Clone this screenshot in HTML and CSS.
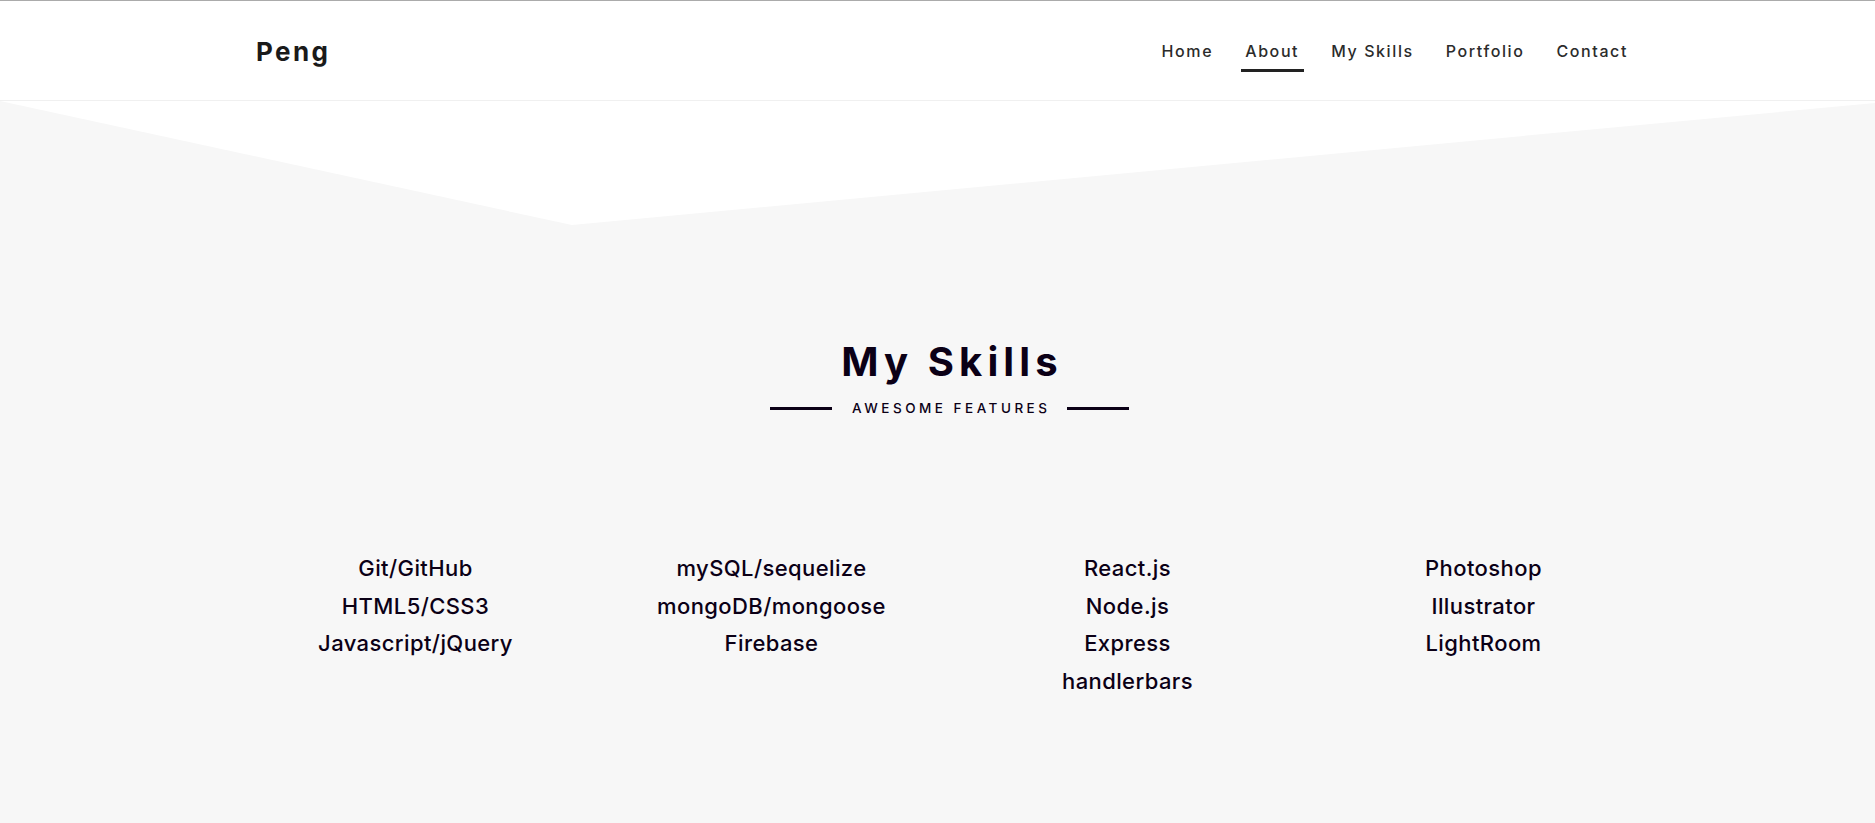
FILE: index.html
```html
<!DOCTYPE html>
<html lang="en">
<head>
<meta charset="utf-8">
<title>Peng</title>
<link rel="stylesheet" href="styles.css">
</head>
<body>
<header class="site-header">
  <div class="header-inner">
    <a class="brand" href="#">Peng</a>
    <nav class="main-nav">
      <a class="nav-link" href="#">Home</a>
      <a class="nav-link active" href="#">About</a>
      <a class="nav-link" href="#">My Skills</a>
      <a class="nav-link" href="#">Portfolio</a>
      <a class="nav-link" href="#">Contact</a>
    </nav>
  </div>
</header>
<section class="skills">
  <div class="skills-inner">
    <div class="section-head">
      <h2 class="section-title">My Skills</h2>
      <div class="section-sub">
        <span class="rule"></span>
        <span class="sub-text">AWESOME FEATURES</span>
        <span class="rule"></span>
      </div>
    </div>
    <div class="skill-grid">
      <ul class="skill-col">
        <li>Git/GitHub</li>
        <li>HTML5/CSS3</li>
        <li>Javascript/jQuery</li>
      </ul>
      <ul class="skill-col">
        <li>mySQL/sequelize</li>
        <li>mongoDB/mongoose</li>
        <li>Firebase</li>
      </ul>
      <ul class="skill-col">
        <li>React.js</li>
        <li>Node.js</li>
        <li>Express</li>
        <li>handlerbars</li>
      </ul>
      <ul class="skill-col">
        <li>Photoshop</li>
        <li>Illustrator</li>
        <li>LightRoom</li>
      </ul>
    </div>
  </div>
</section>
</body>
</html>
```
FILE: styles.css
```css
* { box-sizing: border-box; }
html, body { margin: 0; padding: 0; }
body {
  font-family: Inter, "Open Sans", "DejaVu Sans", sans-serif;
  background: #f7f7f7;
  color: #111;
  height: 823px;
  overflow: hidden;
}
a { text-decoration: none; color: inherit; }

.site-header {
  background: #fff;
  border-top: 1px solid #ababab;
  border-bottom: 1px solid #f0f0f0;
  height: 101px;
}
.header-inner {
  display: flex;
  align-items: center;
  justify-content: space-between;
  height: 99px;
  padding: 0 248px 0 256px;
}
.brand {
  font-size: 26px;
  font-weight: 700;
  letter-spacing: 2.4px;
  color: #1a1a1a;
  margin-top: 2px;
}
.main-nav {
  display: flex;
  align-items: center;
  margin-top: 1px;
  margin-right: -17px;
}
.nav-link {
  position: relative;
  font-size: 16px;
  font-weight: 500;
  letter-spacing: 1.6px;
  color: #2b2b2b;
  padding: 0 16px;
  line-height: 20px;
}
.nav-link.active::after {
  content: "";
  position: absolute;
  left: 12px;
  right: 11px;
  top: 28px;
  height: 3px;
  background: #222;
}

.skills {
  position: relative;
  background: #f7f7f7;
  height: 722px;
}
.skills::before {
  content: "";
  position: absolute;
  left: 0; top: 0; right: 0;
  height: 124px;
  background: #fff;
  clip-path: polygon(0 0, 572px 100%, 100% 2px, 100% 0);
}
.skills-inner {
  position: relative;
  padding: 237px 0 0 24px;
}
.section-head {
  display: flex;
  flex-direction: column;
  align-items: center;
}
.section-title {
  margin: 0;
  font-size: 40px;
  line-height: 48px;
  font-weight: 700;
  letter-spacing: 5.1px;
  color: #0b0016;
  padding-left: 5px;
}
.section-sub {
  display: flex;
  align-items: center;
  gap: 20px;
  margin-top: 14px;
}
.rule {
  width: 62px;
  height: 3px;
  background: #0b0016;
}
.sub-text {
  font-size: 13.5px;
  letter-spacing: 3.5px;
  font-weight: 500;
  color: #0b0016;
  line-height: 16px;
  margin-right: -3.5px;
}
.skill-grid {
  display: grid;
  grid-template-columns: repeat(4, 356px);
  justify-content: center;
  margin-top: 134px;
}
.skill-col {
  list-style: none;
  margin: 0;
  padding: 0;
  text-align: center;
}
.skill-col li {
  font-size: 22px;
  line-height: 37.5px;
  font-weight: 500;
  letter-spacing: 0.4px;
  color: #0b0016;
}
```
